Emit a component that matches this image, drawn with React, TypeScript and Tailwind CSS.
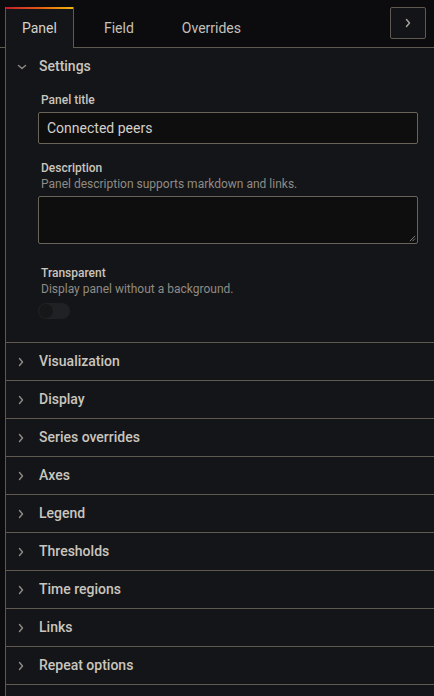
import { ReactNode } from 'react';

// --- Small inline icons ---

const ChevronRight = ({ className }: { className?: string }) => (
  <svg viewBox="0 0 8 12" className={className} fill="none" stroke="currentColor" strokeWidth="1.4" strokeLinecap="round" strokeLinejoin="round">
    <path d="M2.5 2.5 L5.5 6 L2.5 9.5" />
  </svg>
);

const ChevronDown = ({ className }: { className?: string }) => (
  <svg viewBox="0 0 12 8" className={className} fill="none" stroke="currentColor" strokeWidth="1.4" strokeLinecap="round" strokeLinejoin="round">
    <path d="M2.5 2.5 L6 5.5 L9.5 2.5" />
  </svg>
);

const sections = [
  'Visualization',
  'Display',
  'Series overrides',
  'Axes',
  'Legend',
  'Thresholds',
  'Time regions',
  'Links',
  'Repeat options',
];

const Field = ({ label, help, children }: { label: string; help?: string; children: ReactNode }) => (
  <div className="flex flex-col">
    <div className="pl-[3px] text-[12px] leading-[16px] font-medium text-[#c9c5bf]">{label}</div>
    {help && <div className="pl-[3px] text-[12px] leading-[16px] text-[#8f8b85]">{help}</div>}
    {children}
  </div>
);

const CollapsedRow = ({ title }: { title: string }) => (
  <div className="h-[38px] flex items-center border-b border-[#5f5951]">
    <ChevronRight className="w-[8px] h-[12px] ml-[11px] text-[#8f8b85]" />
    <span className="ml-[14px] text-[14px] font-medium text-[#c9c5bf]">{title}</span>
  </div>
);

export default function App() {
  return (
    <div className="w-[434px] h-[696px] overflow-hidden bg-[#0c0c0e] flex flex-col" style={{ fontFamily: 'Roboto, "Liberation Sans", sans-serif' }}>
      {/* Tabs */}
      <div className="flex items-end h-[48px] shrink-0">
        <div className="w-[5px] h-full border-b border-[#5f5951] shrink-0" />
        <div className="relative h-[41px] px-4 flex items-center bg-[#141518] border-l border-r border-[#5f5951] shrink-0">
          <div className="absolute top-0 left-0 right-0 h-[2px] bg-gradient-to-r from-[#c4162a] via-[#e05a10] to-[#f2b60c]" />
          <span className="text-[14px] text-[#d4d0ca] pt-[2px]">Panel</span>
        </div>
        <div className="flex-1 h-full flex items-end border-b border-[#5f5951]">
          <div className="h-[40px] flex items-center gap-4 pl-[14px]">
            <span className="px-4 text-[14px] text-[#c4c0ba] pt-[2px]">Field</span>
            <span className="px-4 text-[14px] text-[#c4c0ba] pt-[2px]">Overrides</span>
          </div>
          <div className="flex-1" />
          <button className="self-start mt-[7px] mr-[8px] w-[36px] h-[32px] flex items-center justify-center border border-[#5f5951] rounded-[2px] bg-[#131417] text-[#a8a49e]">
            <ChevronRight className="w-[8px] h-[12px]" />
          </button>
        </div>
      </div>

      {/* Options pane */}
      <div className="flex-1 ml-[5px] border-l border-[#5f5951] bg-[#141518] flex flex-col">
        {/* Settings (expanded) */}
        <div className="border-b border-[#5f5951]">
          <div className="h-[37px] flex items-center">
            <ChevronDown className="w-[12px] h-[8px] ml-[10px] text-[#8f8b85]" />
            <span className="ml-[11px] text-[14px] font-medium text-[#c9c5bf]">Settings</span>
          </div>
          <div className="pl-[32px] pr-[16px] pt-[7px] pb-[23px] flex flex-col">
            <Field label="Panel title">
              <div className="mt-[4px] h-[32px] flex items-center px-[8px] bg-[#0e0e0f] border border-[#6a635a] rounded-[2px] text-[14px] text-[#d4d0ca]">
                Connected peers
              </div>
            </Field>
            <div className="h-[16px]" />
            <Field label="Description" help="Panel description supports markdown and links.">
              <div className="mt-[4px] relative h-[48px] bg-[#0e0e0f] border border-[#6a635a] rounded-[2px]">
                <svg viewBox="0 0 8 8" className="absolute right-[1px] bottom-[1px] w-[7px] h-[7px] text-[#8f8b85]" stroke="currentColor" strokeWidth="1">
                  <path d="M7 1 L1 7 M7 4 L4 7" />
                </svg>
              </div>
            </Field>
            <div className="h-[21px]" />
            <Field label="Transparent" help="Display panel without a background.">
              <div className="mt-[6px] w-[32px] h-[16px] rounded-full bg-[#1f2124] flex items-center pl-[1px]">
                <div className="w-[14px] h-[14px] rounded-full bg-[#161719]" />
              </div>
            </Field>
          </div>
        </div>

        {sections.map((s) => (
          <CollapsedRow key={s} title={s} />
        ))}
      </div>
    </div>
  );
}
